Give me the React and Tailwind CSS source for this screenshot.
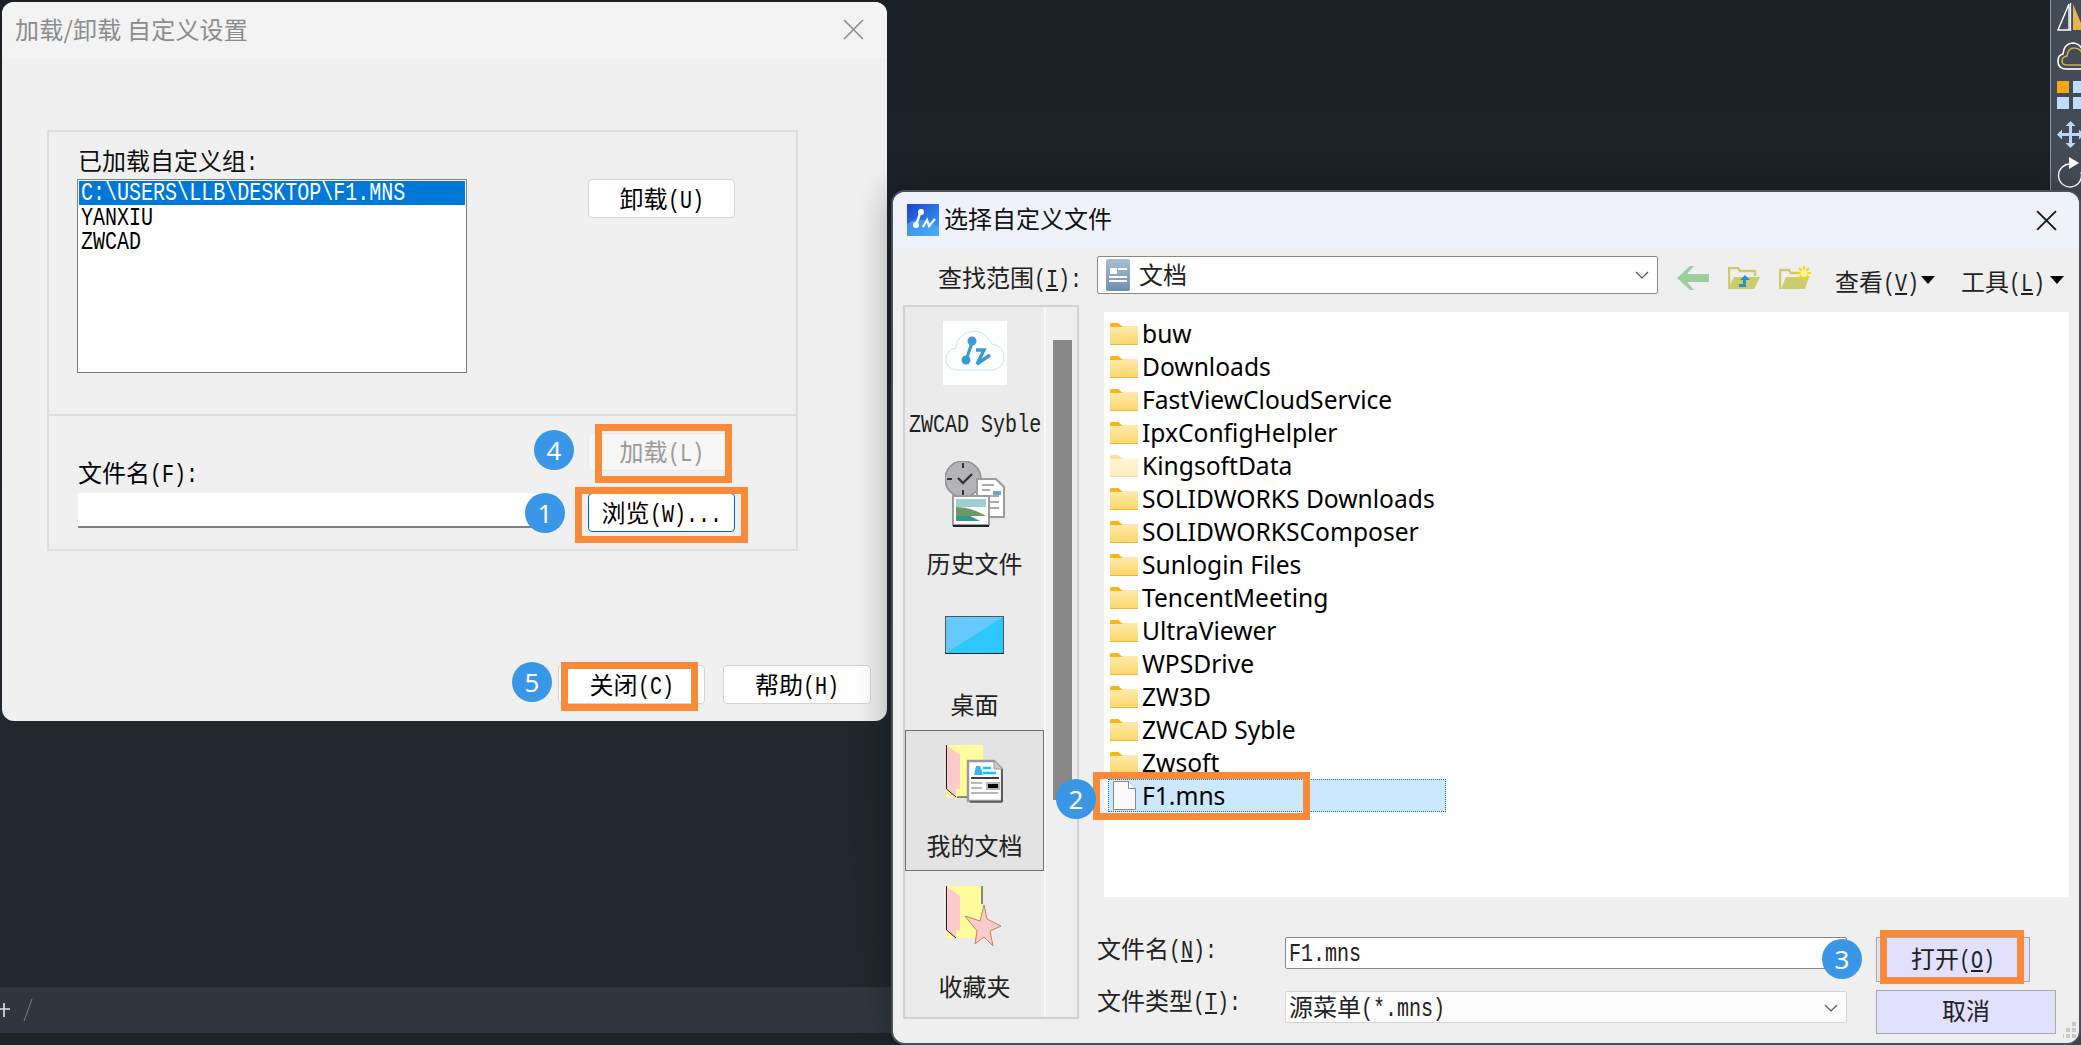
import React from 'react'

const FOLDERS = [
  'buw',
  'Downloads',
  'FastViewCloudService',
  'IpxConfigHelpler',
  'KingsoftData',
  'SOLIDWORKS Downloads',
  'SOLIDWORKSComposer',
  'Sunlogin Files',
  'TencentMeeting',
  'UltraViewer',
  'WPSDrive',
  'ZW3D',
  'ZWCAD Syble',
  'Zwsoft'
]

// half-width latin of the old dialog font: tall glyphs squeezed into 12px cells
function Half({ text }) {
  const clean = text.replace(/_/g, '')
  return (
    <span className="inline-block whitespace-pre text-left align-baseline leading-[24px]" style={{ width: clean.length * 12 }}>
      <span className="inline-block origin-left scale-x-[0.77] text-[26px] leading-[24px] [font-family:'Liberation_Mono',monospace]">
        {text.split(/(_.)/).map((p, j) =>
          p.startsWith('_') ? (
            <span key={j} className="underline">{p.slice(1)}</span>
          ) : (
            p
          )
        )}
      </span>
    </span>
  )
}

// wide CJK next to half-width latin, "_X" underlines X
function Sim({ text, className = '' }) {
  const parts = text.split(/([\u4e00-\u9fff]+)/).filter(Boolean)
  return (
    <span className={`whitespace-nowrap leading-[24px] ${className}`}>
      {parts.map((part, i) =>
        /[\u4e00-\u9fff]/.test(part) ? (
          <span key={i} className="text-[24px] leading-[24px] [font-family:'Noto_Sans_CJK_SC',sans-serif]">
            {part}
          </span>
        ) : (
          <Half key={i} text={part} />
        )
      )}
    </span>
  )
}

function WinButton({ text, className = '' }) {
  return (
    <div className={`flex items-center justify-center rounded-[4px] border pt-[2px] ${className}`}>
      <Sim text={text} />
    </div>
  )
}

function Chevron({ className = '' }) {
  return (
    <svg width="14" height="8" viewBox="0 0 14 8" className={className}>
      <path d="M1 1l6 6 6-6" fill="none" stroke="#555" strokeWidth="1.2" />
    </svg>
  )
}

function CloseX({ color, size, stroke }) {
  return (
    <svg width={size} height={size} viewBox="0 0 20 20">
      <path d="M1 1l18 18M19 1L1 19" stroke={color} strokeWidth={stroke} fill="none" />
    </svg>
  )
}

function FolderIcon({ pale }) {
  return (
    <svg width="28" height="22" viewBox="0 0 28 22" className="shrink-0">
      <defs>
        <linearGradient id="fold" x1="0" y1="0" x2="0" y2="1">
          <stop offset="0" stopColor="#fdeaae" />
          <stop offset="1" stopColor="#fcd667" />
        </linearGradient>
      </defs>
      <g opacity={pale ? 0.45 : 1}>
        <path d="M0 1.500q0-1.500 1.500-1.500h7l3 3h5v3H0z" fill="#fbb417" />
        <path d="M0 4h11.500l2-1H28v18q0 1-1 1H1q-1 0-1-1z" fill="url(#fold)" />
        <path d="M0 21h28v1H0z" fill="#eeb43a" />
      </g>
    </svg>
  )
}

function FileIcon() {
  return (
    <svg width="23" height="29" viewBox="0 0 23 29" className="shrink-0">
      <path d="M.5.5h15l7 7v21H.5z" fill="#fafafa" stroke="#8a8a8a" />
      <path d="M15.500.5v7h7" fill="#fff" stroke="#8a8a8a" />
    </svg>
  )
}

function AppIcon() {
  return (
    <svg width="32" height="32" viewBox="0 0 32 32" className="shrink-0">
      <defs>
        <linearGradient id="appbg" x1="0" y1="0" x2="1" y2="1">
          <stop offset="0" stopColor="#1f3fd0" />
          <stop offset="1" stopColor="#39a7f5" />
        </linearGradient>
      </defs>
      <rect width="32" height="32" fill="url(#appbg)" />
      <path d="M0 20Q14 10 32 24V32H0z" fill="#4cb6f3" opacity=".6" />
      <path d="M14 7L9 21" stroke="#fff" strokeWidth="2.4" />
      <circle cx="14" cy="8" r="3" fill="#fff" />
      <circle cx="9" cy="21" r="3" fill="#fff" />
      <path d="M16 23l4-7 2 6 6-7" stroke="#fff" strokeWidth="2.2" fill="none" />
    </svg>
  )
}

function CloudLogo() {
  return (
    <div className="flex h-[64px] w-[64px] items-center justify-center bg-white">
      <svg width="64" height="64" viewBox="0 0 64 64">
        <path
          d="M14 49Q3 48 3 38q0-9 10-11 1-14 14-16 10-3 18 6 3 3 4 6 12 2 12 13 0 12-13 13z"
          fill="#fff"
          stroke="#bdeaf0"
          strokeWidth="1"
        />
        <path d="M30 19L23 39" stroke="#3b9bd3" strokeWidth="3.2" />
        <circle cx="29" cy="20" r="4.5" fill="#3b9bd3" />
        <circle cx="23" cy="39" r="4.5" fill="#3b9bd3" />
        <path d="M33 29h8l-7 14 13-9" stroke="#3b9bd3" strokeWidth="3.4" fill="none" />
      </svg>
    </div>
  )
}

function HistoryIcon() {
  return (
    <svg width="60" height="66" viewBox="0 0 60 66">
      <circle cx="18" cy="18" r="18" fill="#b4b4b6" stroke="#8e8e90" strokeWidth="1.5" />
      <path d="M18 2v5M18 29v5M2 18h5" stroke="#333" strokeWidth="2" />
      <path d="M13 17l5 5 9-9" stroke="#333" strokeWidth="2.4" fill="none" />
      <path d="M32 18h19l8 8v30H32z" fill="#fff" stroke="#9c9c9f" strokeWidth="2" />
      <path d="M37 24h12M37 29h8M37 35h17M37 41h17M37 47h17" stroke="#a8a8a8" strokeWidth="2" />
      <path d="M48 30h8v4h-8z" fill="#6aa7c9" />
      <rect x="8" y="35" width="36" height="29" fill="#fff" stroke="#9c9c9f" strokeWidth="2" />
      <path d="M44 65H8" stroke="#222" strokeWidth="2" />
      <rect x="11" y="38" width="30" height="8" fill="#9fcfd4" />
      <path d="M11 46q15 0 30 9H11z" fill="#6c9a63" />
      <path d="M11 55h14l10 5H11z" fill="#329793" />
    </svg>
  )
}

function DesktopIcon() {
  return (
    <svg width="59" height="38" viewBox="0 0 59 38">
      <rect x=".5" y=".5" width="58" height="37" fill="#2bc7fd" stroke="#555" />
      <path d="M1 1h57L1 37z" fill="#66c9ff" />
      <path d="M0 37.500h59" stroke="#222" />
    </svg>
  )
}

function DocsFolder() {
  return (
    <svg width="57" height="62" viewBox="0 0 57 62">
      <path d="M0 0h37v52H0z" fill="#fefc9c" />
      <path d="M0 0l14 10v34h-4v8l-10-8z" fill="#ffcaca" />
      <path d="M.5 0v44L10 52" stroke="#222" fill="none" />
      <path d="M11 52h10" stroke="#222" />
      <path d="M22 16h26l8 8v32H22z" fill="#fff" stroke="#9a9a9a" strokeWidth="2.4" />
      <path d="M56 24v33H24" stroke="#222" fill="none" />
      <path d="M48 16v8h8" fill="#ccc" stroke="#9a9a9a" />
      <path d="M30 21h4l3 9h-9z" fill="#2fb8e8" />
      <path d="M37 23h8M37 28h13" stroke="#19c2ff" strokeWidth="2.4" />
      <path d="M25 33h28" stroke="#111" strokeWidth="1.6" />
      <path d="M25 38h11M25 43h11M25 48h27M41 38h12v6H41z" stroke="#b8b8b8" strokeWidth="2" />
    </svg>
  )
}

function StarFolder() {
  return (
    <svg width="57" height="62" viewBox="0 0 57 62">
      <path d="M0 0h36v52H0z" fill="#fefc9c" />
      <path d="M36 0v18" stroke="#222" />
      <path d="M0 0l14 10v34h-4v8l-10-8z" fill="#ffcaca" />
      <path d="M.5 0v44L10 52" stroke="#222" fill="none" />
      <path
        d="M38 19l3 14 14 7-11 5 3 15-9-9-9 7 2-13-12-15 15 5z"
        fill="#ffcaca"
        stroke="#b78a55"
      />
    </svg>
  )
}

function DocSmall() {
  return (
    <div className="flex h-[32px] w-[24px] shrink-0 flex-col items-end gap-[2px] rounded-[2px] bg-gradient-to-b from-[#a9bfd3] to-[#6f8fae] px-[3px] pt-[9px]">
      <div className="flex w-full justify-end gap-[1px]">
        <div className="h-[6px] w-[7px] bg-white" />
        <div className="h-[2px] w-[9px] bg-white" />
      </div>
      <div className="h-[2px] w-full bg-white" />
      <div className="h-[2px] w-full bg-white" />
    </div>
  )
}

function BackArrow() {
  return (
    <svg width="32" height="24" viewBox="0 0 32 24" className="shrink-0">
      <path d="M0 12L13 0h4l-7 8h22v8H10l7 8h-4z" fill="#9ccf9d" />
    </svg>
  )
}

function FolderUp() {
  return (
    <svg width="32" height="22" viewBox="0 0 32 22" className="shrink-0">
      <path d="M1 22V1h9l2 3h15v5" fill="none" stroke="#cbcd6b" strokeWidth="2.4" />
      <path d="M0 22l6-12h26l-6 12z" fill="#cbcd6b" />
      <path d="M11 20h7v-7h4l-5-5-5 5h3v4h-4z" fill="#2a8fd0" />
    </svg>
  )
}

function FolderNew() {
  return (
    <svg width="32" height="24" viewBox="0 0 32 24" className="shrink-0">
      <path d="M1 23V4h9l2 3h11" fill="none" stroke="#cbcd6b" strokeWidth="2.4" />
      <path d="M2 23l5-12h23l-4 12z" fill="#cbcd6b" />
      <path d="M25 0v14M18 7h14M20 2l10 10M30 2L20 12" stroke="#ffd400" strokeWidth="2" />
      <circle cx="25" cy="7" r="3.5" fill="#fff4a0" />
    </svg>
  )
}

function DropTriangle() {
  return <div className="h-0 w-0 border-x-[7px] border-t-[8px] border-x-transparent border-t-black" />
}

function SideItem({ icon, label, active, latin }) {
  return (
    <div
      className={`flex h-[141px] w-full shrink-0 flex-col items-center border ${
        active ? 'border-[#707070] bg-[#e3e3e3]' : 'border-transparent'
      }`}
    >
      <div className="flex h-[91px] items-center">{icon}</div>
      <div className={`flex h-[49px] items-center text-[#222] ${latin ? 'pt-[6px]' : 'pt-[2px]'}`}>
        <Sim text={label} />
      </div>
    </div>
  )
}

function ToolStrip() {
  return (
    <div className="flex h-full w-[31px] shrink-0 flex-col items-start overflow-hidden border-l border-[#8c97a5] bg-[#434b57] pl-[6px] pt-[3px]">
      <svg width="25" height="28" viewBox="0 0 25 28" className="shrink-0">
        <path d="M12 1L1 27h11z" fill="none" stroke="#fff" strokeWidth="1.4" />
        <path d="M13.500 0v29" stroke="#fff" strokeWidth="1.2" />
        <path d="M16 1l11 26H16z" fill="#e8b34e" />
      </svg>
      <svg width="25" height="30" viewBox="0 0 25 30" className="mt-[10px] shrink-0">
        <path d="M9 28Q1 28 1 20q0-6 5-7 1-10 9-11 7 0 10 6" fill="none" stroke="#fff" strokeWidth="1.6" />
        <path d="M9 28h16" stroke="#fff" strokeWidth="1.6" />
        <path d="M25 24H10q-5 0-5-4t5-5q1-8 7-8 6 0 8 5" fill="none" stroke="#d7a957" strokeWidth="1.6" />
      </svg>
      <div className="mt-[10px] grid shrink-0 grid-cols-[12px_12px] gap-[4px]">
        <div className="h-[12px] bg-[#f9a51a]" />
        <div className="h-[12px] bg-[#bfdcfb]" />
        <div className="h-[12px] bg-[#bfdcfb]" />
        <div className="h-[12px] bg-[#bfdcfb]" />
      </div>
      <svg width="25" height="27" viewBox="0 0 25 27" className="mt-[12px] shrink-0">
        <path
          d="M13.500 0l5 5h-3.500v7h7V8.500l5 5-5 5V15h-7v7h3.500l-5 5-5-5H12v-7H5v3.500l-5-5 5-5V12h7V5H8.500z"
          fill="#bcd8f2"
        />
      </svg>
      <svg width="25" height="32" viewBox="0 0 25 32" className="mt-[9px] shrink-0">
        <path d="M14 7a11.500 11.500 0 1 0 10 8" fill="none" stroke="#fff" strokeWidth="1.4" />
        <path d="M12 0l10 6-10 6z" fill="#fff" />
      </svg>
    </div>
  )
}

function LoadDialog() {
  return (
    <div className="absolute left-[2px] top-[2px] flex h-[719px] w-[885px] flex-col overflow-hidden rounded-[12px] bg-[#f0f0f0] text-black">
      <div className="flex h-[56px] shrink-0 items-center justify-between bg-[#f3f3f3] pb-[2px] pl-[13px] pr-[23px]">
        <span className="text-[24px] tracking-[0.2px] text-[#8c8c8c] [font-family:'Noto_Sans_CJK_SC',sans-serif]">
          加载/卸载 自定义设置
        </span>
        <CloseX color="#8a8a8a" size={21} stroke={1.5} />
      </div>
      <div className="ml-[45px] mt-[72px] flex h-[421px] w-[751px] flex-col border-2 border-[#dedede]">
        <div className="flex h-[284px] shrink-0 border-b-2 border-[#dedede] pl-[28px] pt-[16px]">
          <div className="flex flex-col">
            <div className="h-[31px] pl-[1px] text-[#111]">
              <Sim text="已加载自定义组:" />
            </div>
            <div className="flex h-[194px] w-[390px] flex-col border border-[#7a7f87] bg-white p-[1px]">
              <div className="h-[24px] bg-[#0078d7] pl-[2px] text-white">
                <Half text="C:\USERS\LLB\DESKTOP\F1.MNS" />
              </div>
              <div className="mt-[1px] h-[24px] pl-[2px]">
                <Half text="YANXIU" />
              </div>
              <div className="h-[24px] pl-[2px]">
                <Half text="ZWCAD" />
              </div>
            </div>
          </div>
          <WinButton text="卸载(U)" className="ml-[121px] mt-[31px] h-[39px] w-[147px] border-[#d4d4d4] bg-white" />
        </div>
        <div className="flex pl-[29px]">
          <div className="flex flex-col pt-[44px]">
            <div className="h-[33px]">
              <Sim text="文件名(F):" />
            </div>
            <div className="h-[35px] w-[462px] border-b-2 border-[#808080] bg-white" />
          </div>
          <div className="ml-[48px] flex flex-col pt-[17px]">
            <WinButton text="加载(L)" className="h-[38px] w-[147px] border-[#e8e8e8] bg-[#f6f6f6] text-[#9a9a9a]" />
            <WinButton text="浏览(W)..." className="mt-[22px] h-[39px] w-[147px] border-[#0067c0] bg-white" />
          </div>
        </div>
      </div>
      <div className="ml-[556px] mt-[114px] flex gap-[18px]">
        <WinButton text="关闭(C)" className="h-[39px] w-[147px] border-[#d4d4d4] bg-white" />
        <WinButton text="帮助(H)" className="h-[39px] w-[148px] border-[#d4d4d4] bg-white" />
      </div>
    </div>
  )
}

function FileDialog() {
  return (
    <div className="absolute left-[891px] top-[190px] z-10 flex h-[855px] w-[1190px] flex-col overflow-hidden rounded-[14px] border-2 border-[#4b5058] bg-[#efefef] text-black shadow-[0_0_36px_rgba(0,0,0,0.35)]">
      <div className="flex h-[56px] shrink-0 items-center bg-[#eff2fa] pl-[14px] pr-[22px]">
        <AppIcon />
        <span className="mb-[4px] ml-[5px] text-[24px] text-[#111] [font-family:'Noto_Sans_CJK_SC',sans-serif]">
          选择自定义文件
        </span>
        <div className="ml-auto">
          <CloseX color="#1a1a1a" size={21} stroke={1.8} />
        </div>
      </div>

      <div className="flex h-[57px] shrink-0 items-start pl-[45px]">
        <div className="mt-[17px] w-[159px] text-[#222]">
          <Sim text="查找范围(_I):" />
        </div>
        <div className="mt-[8px] flex h-[38px] w-[561px] shrink-0 items-center rounded-[2px] border border-[#8a8a8a] bg-white pl-[8px] pr-[8px]">
          <DocSmall />
          <span className="ml-[9px] mb-[2px] text-[24px] text-[#222] [font-family:'Noto_Sans_CJK_SC',sans-serif]">文档</span>
          <Chevron className="ml-auto" />
        </div>
        <div className="mt-[18px] ml-[19px] flex items-center gap-[19px]">
          <BackArrow />
          <FolderUp />
          <FolderNew />
        </div>
        <div className="ml-[24px] mt-[21px] flex items-center text-[#222]">
          <Sim text="查看(_V)" />
          <div className="mb-[6px] ml-[2px]">
            <DropTriangle />
          </div>
          <div className="ml-[26px]">
            <Sim text="工具(_L)" />
          </div>
          <div className="mb-[6px] ml-[5px]">
            <DropTriangle />
          </div>
        </div>
      </div>

      <div className="flex min-h-0 flex-1 items-start pl-[10px]">
        <div className="flex h-[714px] w-[176px] shrink-0 border-2 border-[#d2d2d2]">
          <div className="flex w-[141px] shrink-0 flex-col overflow-hidden border-r-2 border-[#f8f8f8] bg-[#ebebeb]">
            <SideItem icon={<CloudLogo />} label="ZWCAD Syble" latin />
            <SideItem icon={<HistoryIcon />} label="历史文件" />
            <SideItem icon={<DesktopIcon />} label="桌面" />
            <SideItem icon={<DocsFolder />} label="我的文档" active />
            <SideItem icon={<StarFolder />} label="收藏夹" />
          </div>
          <div className="flex-1 pl-[7px] pt-[33px]">
            <div className="h-[460px] w-[19px] bg-[#888888]" />
          </div>
        </div>

        <div className="ml-[18px] flex w-[972px] shrink-0 flex-col">
          <div className="ml-[7px] mt-[7px] flex h-[585px] flex-col bg-white pt-[5px] text-[24.6px] text-black [font-family:'Noto_Sans',sans-serif]">
            {FOLDERS.map((name) => (
              <div key={name} className="flex h-[33px] shrink-0 items-center gap-[4px] pl-[6px]">
                <FolderIcon pale={name === 'KingsoftData'} />
                <span className="whitespace-nowrap pt-[2px]">{name}</span>
              </div>
            ))}
            <div className="ml-[4px] flex h-[33px] w-[338px] shrink-0 items-center gap-[6px] border border-dotted border-[#0078d7] bg-[#cce8ff] pl-[4px]">
              <FileIcon />
              <span className="pt-[2px]">F1.mns</span>
            </div>
          </div>

          <div className="mt-[40px] flex items-start">
            <div className="-mt-[1px] w-[188px] text-[#222]">
              <Sim text="文件名(_N):" />
            </div>
            <div className="flex h-[32px] w-[562px] items-center rounded-[2px] border border-[#8a8a8a] bg-white pl-[3px] pt-[3px] text-[#222]">
              <Sim text="F1.mns" />
            </div>
            <div className="ml-[29px] flex h-[45px] w-[154px] items-center justify-center border border-[#a9a9a9] bg-[#e1e0fd] text-[#222]">
              <Sim text="打开(_O)" />
            </div>
          </div>
          <div className="mt-[8px] flex items-start">
            <div className="-mt-[2px] w-[188px] text-[#222]">
              <Sim text="文件类型(_T):" />
            </div>
            <div className="mt-[1px] flex h-[32px] w-[562px] items-center justify-between rounded-[2px] border border-[#d4d4d4] bg-[#fcfcfc] pl-[3px] pr-[8px] pt-[1px] text-[#222]">
              <Sim text="源菜单(*.mns)" />
              <Chevron />
            </div>
            <div className="ml-[29px] flex h-[44px] w-[180px] items-center justify-center border border-[#a9a9a9] bg-[#e1e0fd] text-[#222]">
              <Sim text="取消" />
            </div>
          </div>
        </div>
      </div>

      <svg width="14" height="18" viewBox="0 0 14 18" className="absolute bottom-[3px] right-[2px]">
        <path d="M9 0h4v4H9zM9 6h4v4H9zM3 6h4v4H3zM9 12h4v4H9zM3 12h4v4H3zM-3 12h4v4h-4z" fill="#c9c9c9" />
      </svg>
    </div>
  )
}

function Marks() {
  const badge =
    "absolute z-30 flex h-[40px] w-[40px] items-center justify-center rounded-full bg-[#3a97e8] text-[26px] text-white [font-family:'Noto_Sans',sans-serif]"
  const box = 'absolute z-20 border-[7px] border-[#f98a3a]'
  return (
    <>
      <div className={`${box} left-[595px] top-[424px] h-[59px] w-[137px]`} />
      <div className={`${box} left-[575px] top-[487px] h-[56px] w-[173px]`} />
      <div className={`${box} left-[561px] top-[662px] h-[49px] w-[137px]`} />
      <div className={`${box} left-[1093px] top-[772px] h-[48px] w-[217px]`} />
      <div className={`${box} left-[1880px] top-[930px] h-[54px] w-[144px]`} />
      <div className={`${badge} left-[525px] top-[493px]`}>1</div>
      <div className={`${badge} left-[1056px] top-[779px]`}>2</div>
      <div className={`${badge} left-[1822px] top-[939px]`}>3</div>
      <div className={`${badge} left-[534px] top-[430px]`}>4</div>
      <div className={`${badge} left-[512px] top-[662px]`}>5</div>
    </>
  )
}

export default function App() {
  return (
    <div className="relative flex h-[1045px] w-[2081px] overflow-hidden bg-[#1f252c]">
      <div className="flex min-w-0 flex-1 flex-col">
        <div className="flex-1 bg-gradient-to-b from-[#1b2027] via-[#20262e] to-[#22282f]" />
        <div className="flex h-[46px] shrink-0 items-center bg-[#303640] text-white">
          <svg width="40" height="30" viewBox="0 0 40 30">
            <path d="M0 14h10M4 8v14" stroke="#e8e8e8" strokeWidth="1.6" />
            <path d="M24 26l8-22" stroke="#77808c" strokeWidth="1" />
          </svg>
        </div>
        <div className="h-[12px] shrink-0 bg-[#1f242b]" />
      </div>
      <ToolStrip />
      <LoadDialog />
      <FileDialog />
      <Marks />
    </div>
  )
}
